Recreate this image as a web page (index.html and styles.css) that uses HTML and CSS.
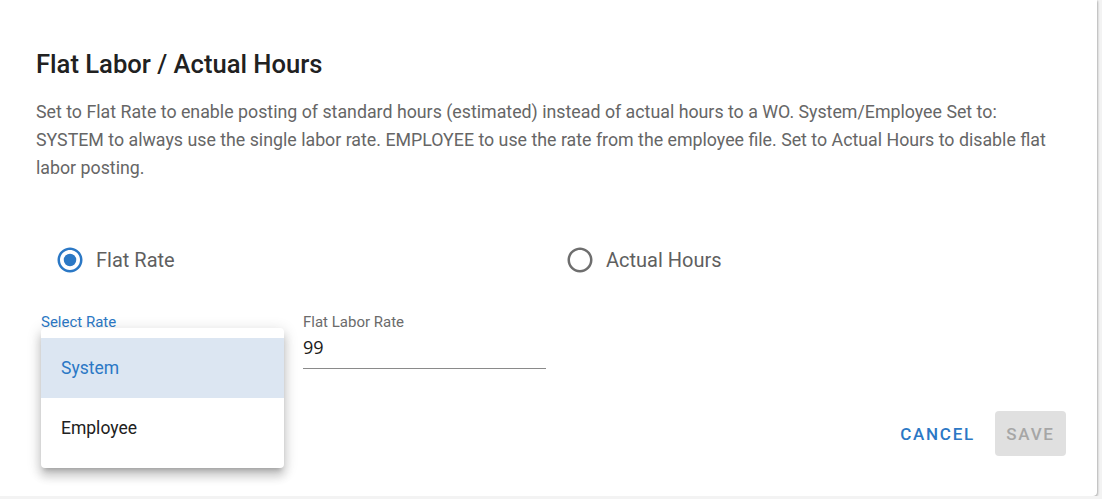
FILE: index.html
```
<!DOCTYPE html>
<html>
<head>
<meta charset="utf-8">
<link rel="stylesheet" href="styles.css">
</head>
<body>
<div class="card">
  <h2 class="title">Flat Labor / Actual Hours</h2>
  <p class="desc">Set to Flat Rate to enable posting of standard hours (estimated) instead of actual hours to a WO. System/Employee Set to: SYSTEM to always use the single labor rate. EMPLOYEE to use the rate from the employee file. Set to Actual Hours to disable flat labor posting.</p>
  <div class="radios">
    <label class="radio">
      <svg class="radio-icon checked" viewBox="0 0 24 24" width="30" height="30"><path d="M12 2C6.48 2 2 6.48 2 12s4.48 10 10 10 10-4.48 10-10S17.52 2 12 2zm0 18c-4.42 0-8-3.58-8-8s3.58-8 8-8 8 3.58 8 8-3.58 8-8 8z"/><circle cx="12" cy="12" r="5"/></svg>
      <span class="radio-text">Flat Rate</span>
    </label>
    <label class="radio">
      <svg class="radio-icon" viewBox="0 0 24 24" width="30" height="30"><path d="M12 2C6.48 2 2 6.48 2 12s4.48 10 10 10 10-4.48 10-10S17.52 2 12 2zm0 18c-4.42 0-8-3.58-8-8s3.58-8 8-8 8 3.58 8 8-3.58 8-8 8z"/></svg>
      <span class="radio-text">Actual Hours</span>
    </label>
  </div>
  <div class="fields">
    <div class="field select-field">
      <div class="field-label active">Select Rate</div>
      <div class="field-input"></div>
      <ul class="menu">
        <li class="menu-item selected">System</li>
        <li class="menu-item">Employee</li>
      </ul>
    </div>
    <div class="field">
      <div class="field-label">Flat Labor Rate</div>
      <div class="field-input value">99</div>
    </div>
  </div>
  <div class="actions">
    <button class="btn btn-text">CANCEL</button>
    <button class="btn btn-disabled">SAVE</button>
  </div>
</div>
</body>
</html>
```
FILE: styles.css
```
* { box-sizing: border-box; }
html, body {
  margin: 0;
  padding: 0;
  background: #f3f3f3;
  font-family: Roboto, "Liberation Sans", sans-serif;
}
.card {
  width: 1097px;
  height: 496px;
  background: #fff;
  border-radius: 0 0 4px 0;
  box-shadow: 0 1px 3px rgba(0,0,0,0.25), 1px 1px 2px rgba(0,0,0,0.15);
  padding: 49px 31px 0 36px;
}
.title {
  margin: 0;
  font-size: 25.6px;
  font-weight: 500;
  line-height: 30px;
  color: #212121;
}
.desc {
  margin: 19px 0 0 0;
  font-size: 17.8px;
  line-height: 28px;
  color: #666;
}
.radios {
  display: grid;
  grid-template-columns: 510px 1fr;
  margin-top: 57px;
  height: 42px;
  padding-left: 19px;
}
.radio {
  display: flex;
  align-items: center;
  gap: 11px;
}
.radio-icon { fill: #6e6e6e; display: block; }
.radio-icon.checked { fill: #2b78c5; }
.radio-text {
  font-size: 20px;
  color: #5f5f5f;
}
.fields {
  display: flex;
  gap: 19px;
  margin-top: 33px;
  padding-left: 5px;
}
.field {
  width: 243px;
  position: relative;
}
.field-label {
  font-size: 15px;
  line-height: 17px;
  color: #6b6b6b;
}
.field-label.active { color: #2b78c5; }
.field-input {
  margin-top: 3px;
  height: 35px;
  line-height: 26px;
  padding-bottom: 8px;
  border-bottom: 1px solid #8a8a8a;
  font-family: "Open Sans", "Noto Sans", sans-serif;
  font-size: 18px;
  color: #1a1a1a;
}
.select-field .field-input { border-bottom-color: transparent; }
.menu {
  position: absolute;
  left: 0;
  top: 14px;
  width: 243px;
  margin: 0;
  padding: 10px 0;
  list-style: none;
  background: #fff;
  border-radius: 4px;
  box-shadow: 0 5px 5px -3px rgba(0,0,0,0.2), 0 8px 10px 1px rgba(0,0,0,0.14), 0 3px 14px 2px rgba(0,0,0,0.12);
  z-index: 5;
}
.menu-item {
  height: 60px;
  display: flex;
  align-items: center;
  padding-left: 20px;
  font-size: 17.5px;
  color: #212121;
}
.menu-item.selected {
  background: #dce6f2;
  color: #2b78c5;
}
.actions {
  display: flex;
  justify-content: flex-end;
  gap: 12px;
  margin-top: 42px;
}
.btn {
  height: 45px;
  border: 0;
  border-radius: 4px;
  font-family: Roboto, "Liberation Sans", sans-serif;
  font-size: 17px;
  font-weight: 500;
  letter-spacing: 1.75px;
  background: transparent;
  padding: 0 8px;
}
.btn-text { color: #2b78c5; }
.btn-disabled {
  background: #e0e0e0;
  color: #a6a6a6;
  width: 71px;
  padding: 0;
}
```
